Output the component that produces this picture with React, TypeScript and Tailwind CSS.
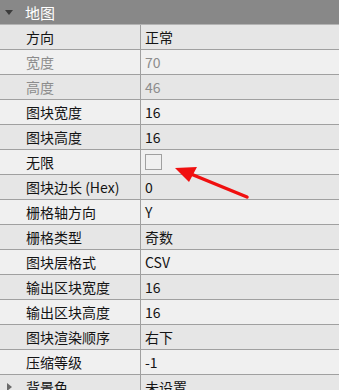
type Row = {
  label: string;
  value: string;
  disabled?: boolean;
  checkbox?: boolean;
  expandable?: boolean;
};

const ROWS: Row[] = [
  { label: "方向", value: "正常" },
  { label: "宽度", value: "70", disabled: true },
  { label: "高度", value: "46", disabled: true },
  { label: "图块宽度", value: "16" },
  { label: "图块高度", value: "16" },
  { label: "无限", value: "", checkbox: true },
  { label: "图块边长 (Hex)", value: "0" },
  { label: "栅格轴方向", value: "Y" },
  { label: "栅格类型", value: "奇数" },
  { label: "图块层格式", value: "CSV" },
  { label: "输出区块宽度", value: "16" },
  { label: "输出区块高度", value: "16" },
  { label: "图块渲染顺序", value: "右下" },
  { label: "压缩等级", value: "-1" },
  { label: "背景色", value: "未设置", expandable: true },
];

function PropertyRow({ row, index }: { row: Row; index: number }) {
  const bg = index % 2 === 0 ? "bg-[#e6e6e6]" : "bg-[#f0f0f0]";
  const text = row.disabled ? "text-[#8c8c8c]" : "text-[#141414]";
  return (
    <div className={`flex h-[25px] border-b border-[#a0a0a0] ${bg} ${text}`}>
      <div className="relative flex w-[141px] shrink-0 items-center border-r border-[#a0a0a0] pl-[26px]">
        {row.expandable && (
          <span className="absolute left-[7px] top-[8px] h-0 w-0 border-y-[4px] border-l-[5px] border-y-transparent border-l-[#6a6a6a]" />
        )}
        <span className="whitespace-nowrap">{row.label}</span>
      </div>
      <div className="flex flex-1 items-center pl-[4px]">
        {row.checkbox ? (
          <span className="h-[16px] w-[17px] border border-[#a0a0a0] bg-[#f0f0f0]" />
        ) : (
          <span className="whitespace-nowrap">{row.value}</span>
        )}
      </div>
    </div>
  );
}

export default function App() {
  return (
    <div
      className="relative h-[390px] w-[339px] overflow-hidden bg-[#f0f0f0] text-[14px] leading-none"
      style={{ fontFamily: '"Noto Sans CJK SC", "Noto Sans", sans-serif' }}
    >
      <div className="flex h-[25px] items-center border-b border-[#b4b4b4] bg-[#888888] text-white">
        <span className="ml-[5px] h-0 w-0 border-x-[4px] border-t-[5px] border-x-transparent border-t-[#3c3c3c]" />
        <span className="ml-[12px] text-[15px]">地图</span>
      </div>
      {ROWS.map((row, i) => (
        <PropertyRow key={row.label} row={row} index={i} />
      ))}

      <svg className="absolute left-0 top-0" width="339" height="390" viewBox="0 0 339 390">
        <line x1="247" y1="197" x2="186" y2="172" stroke="#f01010" strokeWidth="3.5" strokeLinecap="round" />
        <polygon points="175,168 197,167 189,182" fill="#f01010" />
      </svg>
    </div>
  );
}
